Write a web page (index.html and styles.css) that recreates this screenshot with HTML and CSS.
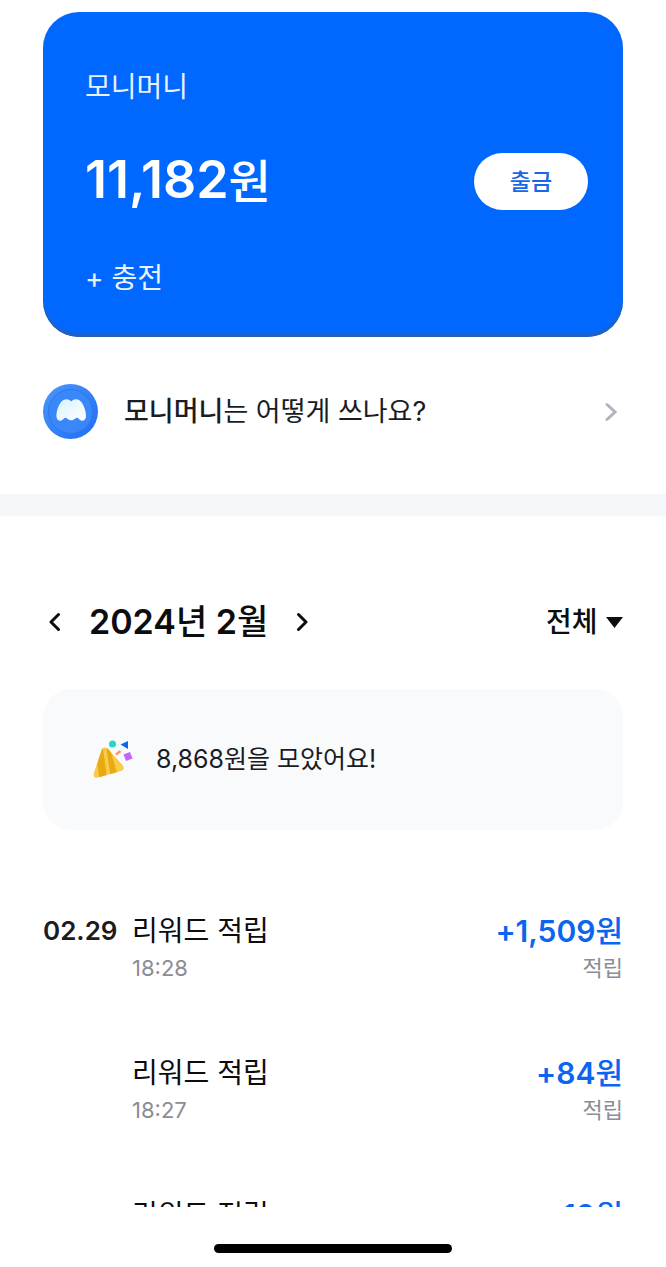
FILE: index.html
```html
<!DOCTYPE html>
<html lang="ko">
<head>
<meta charset="utf-8">
<meta name="viewport" content="width=device-width, initial-scale=1">
<title>모니머니</title>
<link rel="stylesheet" href="styles.css">
</head>
<body>
<div class="app">
  <main class="content">
    <section class="wallet">
      <h1 class="wallet-name">모니머니</h1>
      <div class="wallet-row">
        <strong class="wallet-amount">11,182<span class="wallet-unit">원</span></strong>
        <button class="withdraw" type="button">출금</button>
      </div>
      <button class="charge" type="button">+ 충전</button>
    </section>

    <a class="guide" href="#guide">
      <svg class="guide-logo" viewBox="0 0 55 55" aria-hidden="true">
        <defs>
          <linearGradient id="coin" x1="0" y1="0" x2="1" y2="1">
            <stop offset="0" stop-color="#4a98fb"/>
            <stop offset="1" stop-color="#1f6cf5"/>
          </linearGradient>
          <linearGradient id="mark" x1="1" y1="1" x2="0" y2="0">
            <stop offset="0" stop-color="#ffffff"/>
            <stop offset="1" stop-color="#d8f3ff"/>
          </linearGradient>
        </defs>
        <circle cx="27.500" cy="27.500" r="27.500" fill="url(#coin)"/>
        <circle cx="27.500" cy="27.500" r="22" fill="#3a87fa" stroke="#2f78ea" stroke-width="1"/>
        <path fill="url(#mark)" d="M22 15.500c2.500-.6 4.400.3 6.200 2 1.800-1.700 3.700-2.600 6.200-2 5.600 1.300 8.600 11 8.600 16.500 0 3-1.600 4.800-4 4.800-2.600 0-3-3-4.900-3s-2.600 2.500-5.900 2.500-4-2.500-5.900-2.500-2.300 3-4.900 3c-2.400 0-4-1.800-4-4.800 0-5.500 3-15.200 8.600-16.500z"/>
      </svg>
      <span class="guide-text"><b>모니머니</b>는 어떻게 쓰나요?</span>
      <svg class="guide-arrow" viewBox="0 0 12 20" aria-hidden="true"><path d="M2 2.500l8 7.500-8 7.500"/></svg>
    </a>

    <section class="history">
      <header class="month-bar">
        <div class="month-picker">
          <button class="month-step" type="button" aria-label="이전 달"><svg viewBox="0 0 12 20" aria-hidden="true"><path d="M9.500 2.500L2 10l7.500 7.500"/></svg></button>
          <h2 class="month">2024<span class="unit">년</span> 2<span class="unit">월</span></h2>
          <button class="month-step" type="button" aria-label="다음 달"><svg viewBox="0 0 12 20" aria-hidden="true"><path d="M2.500 2.500L10 10l-7.500 7.500"/></svg></button>
        </div>
        <label class="filter">
          <select class="filter-select" aria-label="내역 종류">
            <option>전체</option>
            <option>적립</option>
          </select>
          <svg class="filter-arrow" viewBox="0 0 17 11" aria-hidden="true"><path d="M0 0h17L8.500 11z"/></svg>
        </label>
      </header>

      <p class="notice">
        <svg class="notice-icon" viewBox="0 0 40 40" aria-hidden="true">
          <clipPath id="cone"><path d="M8.500 10.500C9.500 7 12.500 6.500 15 9L29.500 25c2 2.500 1.500 5-1.500 6L5 37.500c-3 .8-5-1-4.300-4z"/></clipPath>
          <g clip-path="url(#cone)">
            <path fill="#fbc94b" d="M0 0h40v40H0z"/>
            <path fill="#e8aa12" d="M7 8l-2.500 17 2 15 7.500-2-4-30zM13 5l5 35 7.500-2L16 5z"/>
          </g>
          <circle cx="19.500" cy="4" r="3.500" fill="#2ed3c6"/>
          <path fill="#0b66f5" d="M27.500 4.500L35 1v8z"/>
          <path stroke="#ff9866" stroke-width="2.600" d="M23 14.500l4.500-3.500"/>
          <path fill="#c764f8" d="M30.500 14.500l6.500-2.500 2.500 6.500-6.500 2.500z"/>
        </svg>
        <span>8,868원을 모았어요!</span>
      </p>

      <ul class="entries">
        <li class="entry">
          <time class="entry-date">02.29</time>
          <div class="entry-main"><span class="entry-title">리워드 적립</span><time class="entry-sub">18:28</time></div>
          <div class="entry-value"><strong class="entry-amount">+1,509<span class="unit">원</span></strong><span class="entry-sub">적립</span></div>
        </li>
        <li class="entry">
          <span class="entry-date"></span>
          <div class="entry-main"><span class="entry-title">리워드 적립</span><time class="entry-sub">18:27</time></div>
          <div class="entry-value"><strong class="entry-amount">+84<span class="unit">원</span></strong><span class="entry-sub">적립</span></div>
        </li>
        <li class="entry">
          <span class="entry-date"></span>
          <div class="entry-main"><span class="entry-title">리워드 적립</span></div>
          <div class="entry-value"><strong class="entry-amount">+10<span class="unit">원</span></strong></div>
        </li>
      </ul>
    </section>
  </main>
  <footer class="home-area"><div class="home-bar"></div></footer>
</div>
</body>
</html>
```
FILE: styles.css
```css
* { box-sizing: border-box; margin: 0; padding: 0; }

body {
  background: #fff;
  color: #1b1c1f;
  font-family: Inter, "Noto Sans CJK KR", sans-serif;
}

button, select {
  border: 0;
  background: none;
  color: inherit;
  font: inherit;
  cursor: pointer;
}

.unit { font-weight: 500; }

.app { display: flex; flex-direction: column; height: 100vh; }
.content { flex: 1; min-height: 0; overflow: hidden; padding-top: 12px; }

.wallet {
  display: flex;
  flex-direction: column;
  align-items: flex-start;
  margin: 0 43px;
  padding: 55px 35px 39px 42px;
  border-radius: 36px;
  background: #0068ff;
  box-shadow: inset 0 -3px 2px #2860b4;
  color: #fff;
}
.wallet-name, .charge {
  color: #e9f3ff;
  font-size: 28px;
  font-weight: 400;
  line-height: 40px;
}
.wallet-row {
  display: flex;
  align-items: center;
  justify-content: space-between;
  width: 100%;
  margin: 46px 0 48px;
}
.wallet-amount { padding-bottom: 4px; font-size: 52px; font-weight: 600; line-height: 52px; }
.wallet-unit { font-size: 46px; font-weight: 500; line-height: 40px; }
.withdraw {
  width: 114px;
  height: 57px;
  padding-bottom: 3px;
  border-radius: 29px;
  background: #fff;
  color: #1767e8;
  font-size: 23px;
  font-weight: 500;
}

.guide {
  display: flex;
  align-items: center;
  padding: 47px 49px 55px 43px;
  border-bottom: 22px solid #f6f7fa;
  color: inherit;
  text-decoration: none;
}
.guide-logo { width: 55px; height: 55px; }
.guide-text { flex: 1; margin-left: 26px; font-size: 27px; line-height: 40px; }
.guide-text b { font-weight: 500; }
.guide-arrow { width: 12px; height: 20px; }
.guide-arrow path { fill: none; stroke: #b2b4bd; stroke-width: 3; stroke-linecap: round; }

.history { padding: 82px 43px 0; }
.month-bar { display: flex; align-items: center; justify-content: space-between; color: #0c0d0f; }
.month-picker { display: flex; align-items: center; gap: 22px; }
.month-step { display: flex; justify-content: center; width: 24px; height: 20px; }
.month-step svg { width: 12px; height: 20px; }
.month-step path { fill: none; stroke: currentColor; stroke-width: 3; stroke-linecap: round; stroke-linejoin: round; }
.month { font-size: 34px; font-weight: 600; line-height: 48px; }
.filter { display: flex; align-items: center; gap: 8px; }
.filter-select { appearance: none; font-size: 28px; font-weight: 500; line-height: 40px; }
.filter-arrow { width: 17px; height: 11px; fill: currentColor; }

.notice {
  display: flex;
  align-items: center;
  gap: 23px;
  margin-top: 43px;
  padding: 50px;
  border-radius: 28px;
  background: #f8fafc;
  font-size: 25px;
  line-height: 41px;
}
.notice-icon { width: 40px; height: 40px; }

.entries { display: flex; flex-direction: column; gap: 67px; margin-top: 81px; list-style: none; }
.entry { display: flex; }
.entry-date { width: 89px; font-size: 26px; font-weight: 600; line-height: 40px; }
.entry-main, .entry-value { display: flex; flex-direction: column; }
.entry-main { flex: 1; }
.entry-value { align-items: flex-end; }
.entry-title { color: #0c0d0f; font-size: 28px; line-height: 40px; }
.entry-amount { color: #0b65ee; font-size: 30px; font-weight: 600; line-height: 40px; }
.entry-sub { color: #8b8d96; font-size: 22px; line-height: 35px; }

.home-area { display: flex; justify-content: center; height: 60px; padding-top: 37px; }
.home-bar { width: 238px; height: 9px; border-radius: 5px; background: #000; }
```
